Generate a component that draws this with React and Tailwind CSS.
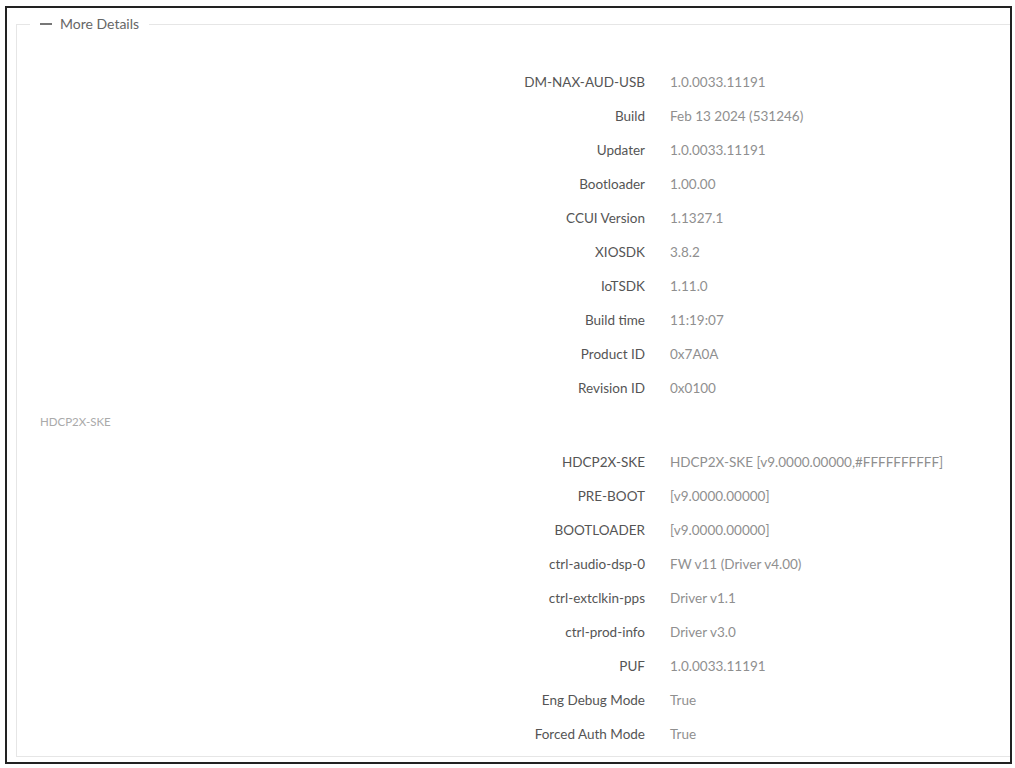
const firmware = [
  ['DM-NAX-AUD-USB', '1.0.0033.11191'],
  ['Build', 'Feb 13 2024 (531246)'],
  ['Updater', '1.0.0033.11191'],
  ['Bootloader', '1.00.00'],
  ['CCUI Version', '1.1327.1'],
  ['XIOSDK', '3.8.2'],
  ['IoTSDK', '1.11.0'],
  ['Build time', '11:19:07'],
  ['Product ID', '0x7A0A'],
  ['Revision ID', '0x0100'],
];

const hdcp = [
  ['HDCP2X-SKE', 'HDCP2X-SKE [v9.0000.00000,#FFFFFFFFFF]'],
  ['PRE-BOOT', '[v9.0000.00000]'],
  ['BOOTLOADER', '[v9.0000.00000]'],
  ['ctrl-audio-dsp-0', 'FW v11 (Driver v4.00)'],
  ['ctrl-extclkin-pps', 'Driver v1.1'],
  ['ctrl-prod-info', 'Driver v3.0'],
  ['PUF', '1.0.0033.11191'],
  ['Eng Debug Mode', 'True'],
  ['Forced Auth Mode', 'True'],
];

const Row = ({ label, value }) => (
  <div className="flex items-center h-[34px]">
    <div className="w-[605px] text-right text-[#555] shrink-0">{label}</div>
    <div className="ml-[25px] text-[#8f8f8f] whitespace-nowrap">{value}</div>
  </div>
);

const App = () => {
  return (
    <div className="w-[1015px] h-[768px] bg-white pt-[6px] pl-[5px]" style={{ fontFamily: 'Lato, "Open Sans", sans-serif' }}>
      <div className="w-[1007px] h-[758px] border-2 border-[#222] overflow-hidden text-[13.5px] pl-[9px]">
        <fieldset className="border border-[#e6e6e6] mt-[8px] pl-[23px] pr-4 pb-[4px] h-[741px] w-[1010px]">
          <legend className="-ml-[10px] px-[10px] flex items-center text-[#666] text-[14px] leading-[16px]">
            <span className="inline-block w-[12px] h-[2px] bg-[#777] mr-[8px]"></span>
            More Details
          </legend>
          <div className="pt-[33px]">
            {firmware.map(([l, v]) => (
              <Row key={l} label={l} value={v} />
            ))}
            <div className="h-[34px] flex items-center text-[#aaa] text-[11.5px]">HDCP2X-SKE</div>
            <div className="pt-[6px]">
              {hdcp.map(([l, v]) => (
                <Row key={l} label={l} value={v} />
              ))}
            </div>
          </div>
        </fieldset>
      </div>
    </div>
  );
};

export default App;
